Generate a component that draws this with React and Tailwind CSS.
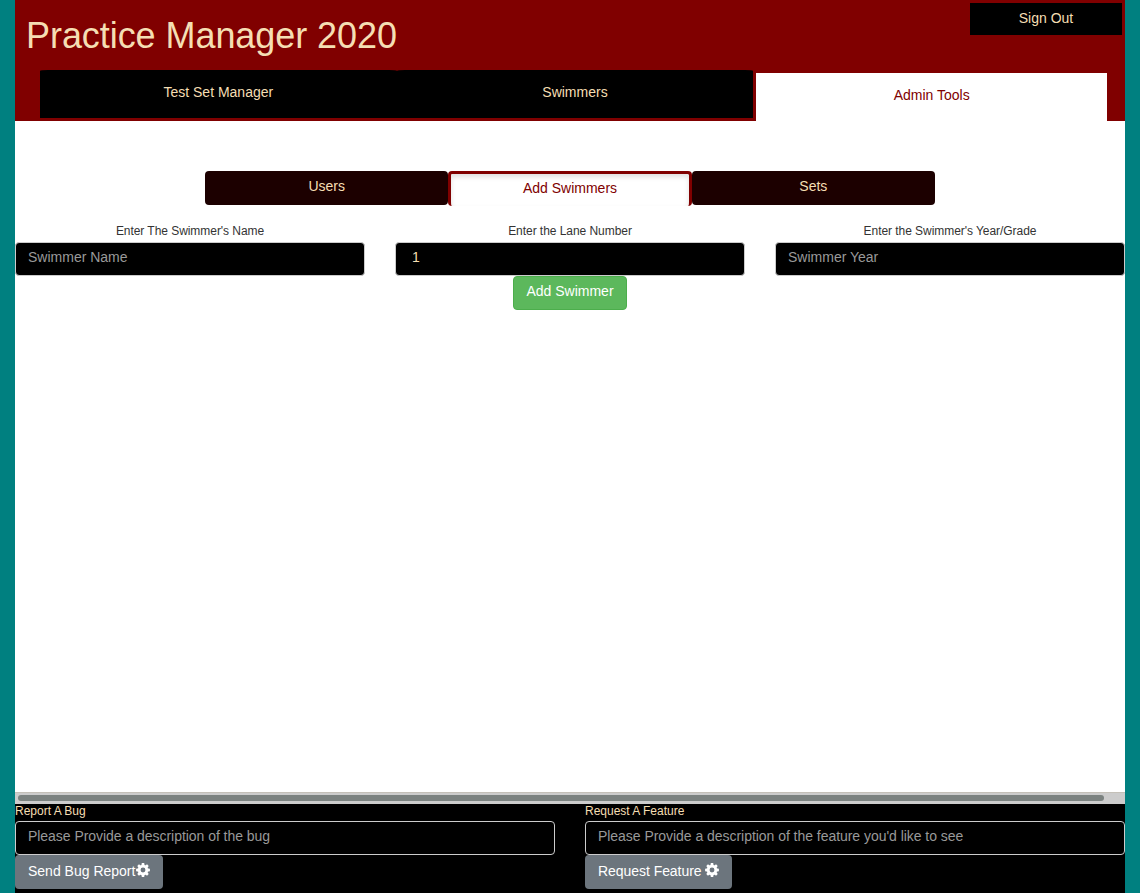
function Gear({ className }) {
  return (
    <svg className={className} width="14" height="14" viewBox="-7 -7 14 14" aria-hidden="true">
      <g fill="currentColor">
        {[0, 45, 90, 135].map((a) => (
          <path key={a} transform={`rotate(${a})`} d="M-1.2-6.9h2.4l.5 2.8h-3.4zM-1.2 6.9h2.4l.5-2.8h-3.4z" />
        ))}
      </g>
      <circle r="3.8" fill="none" stroke="currentColor" strokeWidth="2.7" />
    </svg>
  );
}

const tab = 'h-12 bg-black pt-3 text-center [border-radius:8px_8px_0_0/1px_1px_0_0]';
const pill = 'h-[34px] rounded bg-[#1c0000] pt-[5px] text-center';

function Field({ label, text, filled }) {
  return (
    <div className="flex-1">
      <div className="h-[22px] pt-[3px] text-center text-xs leading-[17px] tracking-[-0.05px] text-[#333]">{label}</div>
      <div
        className={
          filled
            ? 'h-[34px] rounded border border-[#ccc] bg-black pt-[4px] pl-4 text-[wheat]'
            : 'h-[34px] rounded border border-[#ccc] bg-black pt-[4px] pl-3 text-[#999]'
        }
      >
        {text}
      </div>
    </div>
  );
}

function Feedback({ label, text, children }) {
  return (
    <div className="flex flex-1 flex-col items-start">
      <div className="h-[17px] text-xs leading-[15px] text-[wheat]">{label}</div>
      <div className="h-[34px] w-full rounded border border-[#ccc] pt-[4px] pl-3 tracking-[-0.04px] text-[#999]">{text}</div>
      {children}
    </div>
  );
}

export default function App() {
  return (
    <div className="h-[893px] bg-[teal] px-[15px] font-['Liberation_Sans',Arial,sans-serif] text-sm leading-5">
      <div className="flex h-full flex-col bg-white">
        <header className="h-[121px] bg-[maroon] text-[wheat]">
          <div className="flex h-[70px] items-start justify-between pr-[3px] pl-[11px]">
            <h1 className="pt-4 text-4xl leading-[40px] tracking-[-0.06px]">Practice Manager 2020</h1>
            <button className="mt-[3px] h-8 w-[152px] bg-black pb-[2px]">Sign Out</button>
          </div>
          <nav className="grid grid-cols-3 pr-[15px] pl-[25px]">
            <div className={tab}>Test Set Manager</div>
            <div className={tab}>Swimmers</div>
            <div className="h-[51px] border-x-[3px] border-t-[3px] border-[maroon] bg-white pt-3 text-center text-[maroon]">
              Admin Tools
            </div>
          </nav>
        </header>
        <main className="flex-1">
          <div className="mt-[50px] grid h-[50px] grid-cols-3 items-start px-[190px] text-[wheat]">
            <div className={pill}>Users</div>
            <div className="h-[35px] rounded border-x-[3px] border-t-[3px] border-[maroon] bg-white pt-1 text-center text-[maroon] shadow-[inset_0_3px_5px_rgba(0,0,0,0.125)]">
              Add Swimmers
            </div>
            <div className={pill}>Sets</div>
          </div>
          <div className="mt-[-1px] flex gap-[30px]">
            <Field label="Enter The Swimmer's Name" text="Swimmer Name" />
            <Field label="Enter the Lane Number" text="1" filled />
            <Field label="Enter the Swimmer's Year/Grade" text="Swimmer Year" />
          </div>
          <button className="mx-auto flex h-[34px] rounded border border-[#4cae4c] bg-[#5cb85c] px-3 pt-1 text-white">
            Add Swimmer
          </button>
        </main>
        <footer className="h-[101px] bg-black">
          <div className="h-3 border-t border-[#c4c0b8] bg-[#ccc] pt-[2px] pr-[21px] pl-[3px]">
            <div className="h-[6px] rounded-full bg-[#7b8280]" />
          </div>
          <div className="flex gap-[30px]">
            <Feedback label="Report A Bug" text="Please Provide a description of the bug">
              <button className="flex h-[34px] w-[148px] items-start rounded bg-[#6c757d] pt-[6px] pl-[13px] text-white">
                Send Bug Report
                <Gear className="mt-[2px] ml-[0.5px]" />
              </button>
            </Feedback>
            <Feedback label="Request A Feature" text="Please Provide a description of the feature you'd like to see">
              <button className="flex h-[34px] w-[147px] items-start rounded bg-[#6c757d] pt-[6px] pl-[13px] tracking-[-0.05px] text-white">
                Request Feature
                <Gear className="mt-[2px] ml-[3px]" />
              </button>
            </Feedback>
          </div>
        </footer>
      </div>
    </div>
  );
}
